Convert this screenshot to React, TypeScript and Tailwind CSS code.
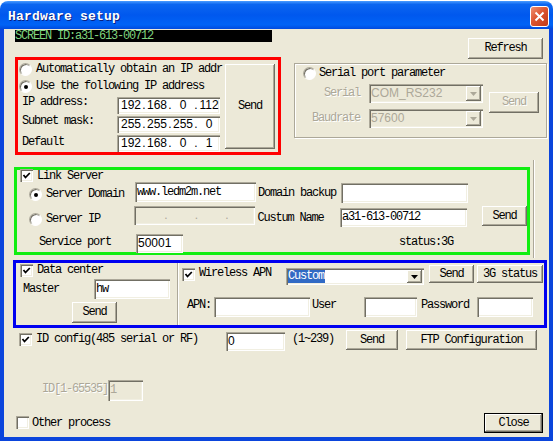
import { Fragment, type ReactNode } from "react";
import clsx from "clsx";

const raised = "bg-[#ece9d8] shadow-[inset_-1px_-1px_#716f64,inset_1px_1px_#fff,inset_-2px_-2px_#aca899]";
const sunken = "shadow-[inset_1px_1px_#aca899,inset_2px_2px_#716f64,inset_-1px_-1px_#fff,inset_-2px_-2px_#f1efe2]";
const sans = "font-['Liberation_Sans',Arial,sans-serif] text-[12px] tracking-normal";
const dim = "text-[#aca899] [text-shadow:1px_1px_#fff]";

type Props = { className?: string; children?: ReactNode; disabled?: boolean };

function Btn({ className, children, disabled, def }: Props & { def?: boolean }) {
  return (
    <button
      type="button"
      className={clsx(
        "flex shrink-0 items-center justify-center whitespace-nowrap",
        raised,
        disabled ? dim : "text-black",
        def && "border border-black",
        className
      )}
    >
      {children}
    </button>
  );
}

function Field({ className, children, disabled, num }: Props & { num?: boolean }) {
  return (
    <div
      className={clsx(
        "flex shrink-0 items-center overflow-hidden whitespace-nowrap pl-[2px]",
        sunken,
        disabled ? "bg-[#ece9d8] text-[#aca899]" : "bg-white",
        num && sans,
        className
      )}
    >
      {children}
    </div>
  );
}

function IpField({ values, seg, className, disabled }: { values: string[]; seg: string; className?: string; disabled?: boolean }) {
  return (
    <div
      className={clsx(
        "flex shrink-0 items-center pl-[3px]",
        sunken,
        sans,
        disabled ? "bg-[#ece9d8] text-[#aca899]" : "bg-white",
        className
      )}
    >
      {values.map((v, i) => (
        <Fragment key={i}>
          {i > 0 && <span className="w-[4px] text-center">.</span>}
          <span className={clsx("text-center", seg)}>{v}</span>
        </Fragment>
      ))}
    </div>
  );
}

function Combo({ className, children, disabled }: Props) {
  return (
    <div
      className={clsx(
        "flex shrink-0 items-stretch py-[2px] pl-[2px] pr-[2px]",
        sunken,
        disabled ? "bg-[#ece9d8] text-[#aca899]" : "bg-white",
        className
      )}
    >
      <div className="flex flex-1 items-stretch overflow-hidden whitespace-nowrap">{children}</div>
      <div className={clsx("flex w-[15px] items-center justify-center", raised)}>
        <svg width="7" height="4" viewBox="0 0 7 4">
          <path d="M0 0H7L3.5 4Z" fill={disabled ? "#aca899" : "#000"} />
        </svg>
      </div>
    </div>
  );
}

function Check({ on, className }: { on?: boolean; className?: string }) {
  return (
    <span className={clsx("flex h-[13px] w-[13px] shrink-0 items-center justify-center bg-white", sunken, className)}>
      {on && (
        <svg width="9" height="9" viewBox="0 0 9 9">
          <path d="M1.5 4L3.5 6.5L7.8 2" fill="none" stroke="#000" strokeWidth="1.8" />
        </svg>
      )}
    </span>
  );
}

function Radio({ on, className }: { on?: boolean; className?: string }) {
  return (
    <span
      className={clsx(
        "relative h-[13px] w-[13px] shrink-0 rounded-full border border-b-white border-l-[#aca899] border-r-white border-t-[#aca899] bg-white shadow-[inset_1px_1px_#716f64]",
        className
      )}
    >
      {on && <span className="absolute left-[3.5px] top-[3.5px] h-[4px] w-[4px] rounded-full bg-black" />}
    </span>
  );
}

export default function App() {
  return (
    <div className="flex h-[441px] w-[553px] flex-col bg-white font-['Liberation_Mono',monospace] text-[12px] leading-[13px] tracking-[-1.2px] text-black">
      {/* title bar */}
      <div className="mt-[1px] flex h-[28px] shrink-0 items-start rounded-t-[8px] bg-[linear-gradient(180deg,#4a9cff_0%,#0c66f0_12%,#0058ee_50%,#0063f6_85%,#004ade_100%)] pl-[8px] pr-[4px]">
        <span className="mt-[9px] text-[13px] font-bold leading-[13px] tracking-[0.2px] text-white [text-shadow:1px_1px_#0a1f80]">
          Hardware setup
        </span>
        <div className="ml-auto mt-[5px] flex h-[21px] w-[19px] items-center justify-center rounded-[3px] border border-white bg-[linear-gradient(135deg,#f09070_0%,#dc5530_45%,#c03a18_100%)]">
          <svg width="11" height="11" viewBox="0 0 11 11">
            <path d="M1.5 1.5L9.5 9.5M9.5 1.5L1.5 9.5" stroke="#fff" strokeWidth="2" />
          </svg>
        </div>
      </div>

      {/* client area */}
      <div className="flex flex-1 flex-col border-x-4 border-b-4 border-[#0b45dc] bg-[#ece9d8]">
        <div className="flex h-[28px] shrink-0 items-start">
          <div className="ml-[11px] mt-[1px] h-[12px] w-[257px] bg-black leading-[12px] text-[#7ed37e]">
            SCREEN ID:a31-613-00712
          </div>
          <Btn className="ml-auto mr-[6px] mt-[9px] h-[21px] w-[75px]">Refresh</Btn>
        </div>

        <div className="flex shrink-0 items-start">
          <div className="ml-[11px] flex h-[98px] w-[266px] border-[3px] border-[#ff0000]">
            <div className="flex w-[207px] flex-col overflow-hidden pt-[1px]">
              <div className="flex h-[17px] shrink-0 items-center whitespace-nowrap">
                <Radio className="ml-[1px]" />
                <span className="ml-[4px]">Automatically obtain an IP addr</span>
              </div>
              <div className="flex h-[17px] shrink-0 items-center whitespace-nowrap">
                <Radio on className="ml-[1px]" />
                <span className="ml-[4px]">Use the following IP address</span>
              </div>
              <div className="mt-[2px] flex flex-col gap-[2px]">
                <div className="flex h-[17px] items-start">
                  <span className="ml-[4px] mt-[-1px] w-[95px]">IP address:</span>
                  <IpField values={["192", "168", "0", "112"]} seg="w-[22px]" className="h-[17px] w-[103px]" />
                </div>
                <div className="flex h-[17px] items-start">
                  <span className="ml-[4px] mt-[-1px] w-[95px]">Subnet mask:</span>
                  <IpField values={["255", "255", "255", "0"]} seg="w-[22px]" className="h-[17px] w-[103px]" />
                </div>
                <div className="flex h-[17px] items-start">
                  <span className="ml-[4px] mt-[1px] w-[95px]">Default</span>
                  <IpField values={["192", "168", "0", "1"]} seg="w-[22px]" className="h-[17px] w-[103px]" />
                </div>
              </div>
            </div>
            <Btn className="mt-[4px] h-[85px] w-[50px]">Send</Btn>
          </div>

          <div className="ml-[13px] mt-[6px] flex h-[75px] w-[253px] flex-col border border-[#aca899] shadow-[inset_1px_1px_#fff,1px_1px_#fff]">
            <div className="ml-[8px] mt-[3px] flex h-[13px] items-center">
              <Radio />
              <span className="ml-[3px]">Serial port parameter</span>
            </div>
            <div className="mt-[4px] flex items-start">
              <div className="flex flex-col gap-[6px]">
                <div className="flex h-[19px] items-center">
                  <span className={clsx("w-[65px] text-right", dim)}>Serial</span>
                  <Combo disabled className="ml-[9px] h-[19px] w-[114px]">
                    <span className={clsx("flex items-center", sans)}>COM_RS232</span>
                  </Combo>
                </div>
                <div className="flex h-[19px] items-center">
                  <span className={clsx("w-[65px] text-right", dim)}>Baudrate</span>
                  <Combo disabled className="ml-[9px] h-[19px] w-[114px]">
                    <span className={clsx("flex items-center", sans)}>57600</span>
                  </Combo>
                </div>
              </div>
              <Btn disabled className="ml-[6px] mt-[8px] h-[21px] w-[50px]">
                Send
              </Btn>
            </div>
          </div>
        </div>

        {/* link server */}
        <div className="mt-[12px] flex h-[88px] shrink-0">
          <div className="ml-[10px] flex w-[516px] flex-col border-[3px] border-[#11ee11]">
            <div className="flex h-[12px] shrink-0 items-start">
              <Check on className="ml-[3px] mt-[-1px]" />
              <span className="ml-[4px] leading-[12px]">Link Server</span>
            </div>
            <div className="flex h-[21px] shrink-0 items-start">
              <div className="flex w-[118px] items-start pt-[6px]">
                <Radio on className="ml-[12px]" />
                <span className="ml-[4px]">Server Domain</span>
              </div>
              <Field className="h-[20px] w-[121px]">www.ledm2m.net</Field>
              <span className="ml-[2px] mt-[5px] w-[83px]">Domain backup</span>
              <Field className="mt-[1px] h-[20px] w-[127px]" />
            </div>
            <div className="mt-[3px] flex h-[21px] shrink-0 items-start">
              <div className="flex w-[118px] items-start pt-[7px]">
                <Radio className="ml-[12px]" />
                <span className="ml-[4px]">Server IP</span>
              </div>
              <IpField disabled values={["", "", "", ""]} seg="w-[27px]" className="h-[19px] w-[121px]" />
              <span className="ml-[2px] mt-[6px] w-[83px]">Custum Name</span>
              <Field className="mt-[2px] h-[19px] w-[127px]">a31-613-00712</Field>
              <Btn className="ml-[15px] h-[20px] w-[45px]">Send</Btn>
            </div>
            <div className="mt-[7px] flex h-[18px] shrink-0 items-start">
              <span className="ml-[22px] mt-[2px] w-[97px]">Service port</span>
              <Field num className="h-[19px] w-[47px]">50001</Field>
              <span className="ml-[216px] mt-[2px]">status:3G</span>
            </div>
          </div>
          <div className="ml-[3px] mt-[-7px] h-[98px] w-[2px] border-x border-l-[#aca899] border-r-white" />
        </div>

        {/* data center / wireless */}
        <div className="ml-[9px] mt-[5px] flex h-[68px] w-[534px] shrink-0 border-[3px] border-[#0000f0]">
          <div className="flex w-[161px] flex-col">
            <div className="mt-[1px] flex h-[13px] items-center">
              <Check on className="ml-[4px]" />
              <span className="ml-[4px]">Data center</span>
            </div>
            <div className="mt-[2px] flex h-[20px] items-start">
              <span className="ml-[7px] mt-[4px] w-[71px]">Master</span>
              <Field className="h-[20px] w-[76px]">hw</Field>
            </div>
            <Btn className="ml-[56px] mt-[3px] h-[21px] w-[45px]">Send</Btn>
          </div>
          <div className="w-[2px] border-x border-l-[#aca899] border-r-white" />
          <div className="flex flex-1 flex-col">
            <div className="flex h-[22px] items-start">
              <Check on className="ml-[3px] mt-[5px]" />
              <span className="ml-[4px] mt-[4px] w-[87px]">Wireless APN</span>
              <Combo className="mt-[5px] h-[17px] w-[138px]">
                <span className="flex items-center bg-[#316ac5] pr-[1px] text-white">Custom</span>
              </Combo>
              <Btn className="ml-[5px] mt-[2px] h-[18px] w-[45px]">Send</Btn>
              <Btn className="ml-[3px] mt-[2px] h-[18px] w-[66px]">3G status</Btn>
            </div>
            <div className="mt-[12px] flex h-[20px] items-start">
              <span className="ml-[8px] mt-[2px] w-[27px]">APN:</span>
              <Field className="h-[20px] w-[96px]" />
              <span className="ml-[2px] mt-[2px] w-[52px]">User</span>
              <Field className="h-[20px] w-[53px]" />
              <span className="ml-[4px] mt-[2px] w-[56px]">Password</span>
              <Field className="h-[20px] w-[56px]" />
            </div>
          </div>
        </div>

        <div className="mt-[2px] flex h-[21px] shrink-0 items-start">
          <Check on className="ml-[15px] mt-[3px]" />
          <span className="ml-[4px] mt-[3px] w-[190px]">ID config(485 serial or RF)</span>
          <Field num className="mt-[2px] h-[19px] w-[59px]">0</Field>
          <span className="ml-[7px] mt-[3px] w-[54px]">(1~239)</span>
          <Btn className="h-[20px] w-[52px]">Send</Btn>
          <Btn className="ml-[8px] h-[20px] w-[131px]">FTP Configuration</Btn>
        </div>

        <div className="mt-[29px] flex h-[21px] shrink-0 items-start">
          <span className={clsx("ml-[38px] mt-[3px]", dim)}>ID[1-65535]</span>
          <Field disabled className="h-[21px] w-[35px]">1</Field>
        </div>

        <div className="mt-[12px] flex h-[20px] shrink-0 items-start">
          <Check className="ml-[12px] mt-[3px]" />
          <span className="ml-[3px] mt-[4px]">Other process</span>
          <Btn def className="ml-auto mr-[6px] h-[20px] w-[59px]">
            Close
          </Btn>
        </div>
      </div>
    </div>
  );
}
